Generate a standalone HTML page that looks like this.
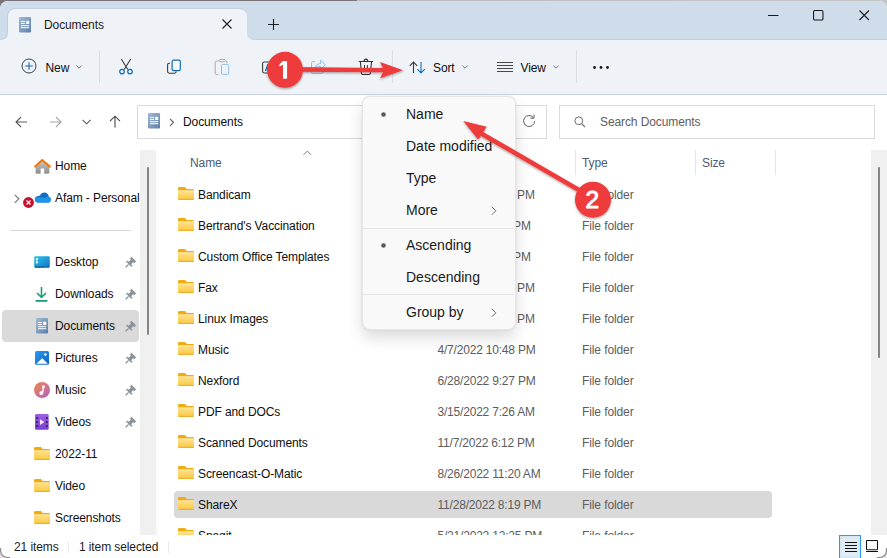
<!DOCTYPE html>
<html><head><meta charset="utf-8">
<style>
*{margin:0;padding:0;box-sizing:border-box}
html,body{width:887px;height:558px;overflow:hidden;background:#e4e4e4}
body{position:relative;font-family:"Liberation Sans",sans-serif;font-size:12px;color:#0e0e0e}
#topline{position:absolute;left:0;top:0;width:887px;height:8px;background:linear-gradient(to right,#7a7478 0,#7a7478 357px,#bcbcbc 357px,#c4c4c4 100%)}
#win{position:absolute;left:0;top:1px;width:887px;height:557px;background:#fff;border-radius:8px;overflow:hidden}
#title{position:absolute;left:0;top:0;width:887px;height:39px;background:#d0ddea}
#tab{position:absolute;left:8px;top:8px;width:239px;height:31px;background:#eff3f8;border-radius:8px 8px 0 0}
#toolbar{position:absolute;left:0;top:39px;width:887px;height:55px;background:#eff3f8;border-bottom:1px solid #cbd5df}
.t{position:absolute;white-space:nowrap;line-height:16px;height:16px;letter-spacing:-0.1px}
svg{position:absolute;overflow:visible}
.sep{position:absolute;width:1px;background:#d9dee4}
.box{position:absolute;border:1px solid #dadada;background:#fff}
.nav{position:absolute;left:55px;color:#1b1b1b}
.row .t{}
.nm{color:#0e0e0e}
.gr{color:#5d5d5d}
.pin{position:absolute;left:125px}
</style></head><body>
<svg width="0" height="0" style="position:absolute"><defs>
<linearGradient id="fg" x1="0" y1="0" x2="0" y2="1"><stop offset="0" stop-color="#fee293"/><stop offset="1" stop-color="#fbc83e"/></linearGradient>
<linearGradient id="docg" x1="0" y1="0" x2="1" y2="1"><stop offset="0" stop-color="#a3bcd7"/><stop offset="1" stop-color="#5b7fa8"/></linearGradient>
<linearGradient id="deskg" x1="0" y1="0" x2="1" y2="1"><stop offset="0" stop-color="#30c4e4"/><stop offset="1" stop-color="#1272cb"/></linearGradient>
<linearGradient id="musg" x1="0" y1="0" x2="1" y2="1"><stop offset="0" stop-color="#f08a4b"/><stop offset="1" stop-color="#b45fc8"/></linearGradient>
<linearGradient id="vidg" x1="0" y1="0" x2="0" y2="1"><stop offset="0" stop-color="#a05ee8"/><stop offset="1" stop-color="#7b3fd6"/></linearGradient>
<linearGradient id="homeg" x1="0" y1="0" x2="0" y2="1"><stop offset="0" stop-color="#c9c9c9"/><stop offset="1" stop-color="#8f8f8f"/></linearGradient>
<linearGradient id="cloudg" x1="0" y1="0" x2="1" y2="1"><stop offset="0" stop-color="#2a8de0"/><stop offset="1" stop-color="#1063c2"/></linearGradient>
</defs></svg>
<div id="topline"></div>
<div id="win">
<div id="toolbar"></div>

<svg width="887" height="42" style="left:0;top:0"><rect x="0" y="0" width="887" height="39" fill="#cfdcea"/><path d="M-1 38.5H0.5Q7.5 38.5 7.5 31.5V16Q7.5 7.5 16 7.5H239Q246.5 7.5 246.5 16V31.5Q246.5 38.5 253.5 38.5H888" fill="none" stroke="#c1cedc" stroke-width="1.2"/><path d="M0 39Q8 39 8 31V16Q8 8 16 8H239Q247 8 247 16V31Q247 39 255 39Z" fill="#eff3f8"/></svg>
<svg width="12" height="16" style="left:19px;top:16px" viewBox="0 0 12 16"><rect x="0" y="0" width="12" height="15.4" rx="1.2" fill="url(#docg)"/><rect x="2" y="4" width="4" height="1" fill="#fff"/><rect x="2" y="6" width="4" height="1" fill="#fff"/><rect x="7.2" y="3.8" width="3" height="3.2" fill="#fff"/><rect x="2" y="8.2" width="8.2" height="1" fill="#fff"/><rect x="2" y="10.2" width="8.2" height="1" fill="#fff"/></svg>
<div class="t" style="left:44px;top:16px;color:#1a1a1a">Documents</div>
<svg width="10" height="10" style="left:222px;top:18px"><path d="M0.5 0.5L9.5 9.5M9.5 0.5L0.5 9.5" stroke="#1f1f1f" stroke-width="1.1"/></svg>
<svg width="11" height="11" style="left:268px;top:18px"><path d="M5.5 0V11M0 5.5H11" stroke="#1f1f1f" stroke-width="1.1"/></svg>
<svg width="11" height="2" style="left:768px;top:14px"><path d="M0 0.5H10.5" stroke="#1a1a1a" stroke-width="1.1"/></svg>
<svg width="11" height="11" style="left:813px;top:9px"><rect x="0.55" y="0.55" width="9.4" height="9.4" rx="1.3" fill="none" stroke="#1a1a1a" stroke-width="1.1"/></svg>
<svg width="11" height="11" style="left:859px;top:9px"><path d="M0.5 0.5L10 10M10 0.5L0.5 10" stroke="#1a1a1a" stroke-width="1.1"/></svg>
<svg width="16" height="16" style="left:20.5px;top:57.4px"><circle cx="8" cy="8" r="7" fill="none" stroke="#404040" stroke-width="1"/><path d="M8 4.2V11.8M4.2 8H11.8" stroke="#0f6cbd" stroke-width="1.1"/></svg>
<div class="t" style="left:45.5px;top:59px">New</div>
<svg width="6" height="4" style="left:76px;top:64px"><path d="M0.3 0.5L3 3.2L5.7 0.5" fill="none" stroke="#707070" stroke-width="0.9"/></svg>
<div class="sep" style="left:99px;top:50px;height:32px"></div>
<svg width="14" height="16" style="left:119px;top:57px"><path d="M2.3 1L8.8 11.5M11.7 1L5.2 11.5" stroke="#3b3b3b" stroke-width="1.1"/><circle cx="3" cy="13.6" r="2.3" fill="#eff3f8" stroke="#0f6cbd" stroke-width="1.2"/><circle cx="11" cy="13.6" r="2.3" fill="#eff3f8" stroke="#0f6cbd" stroke-width="1.2"/></svg>
<svg width="16" height="16" style="left:166px;top:58px"><path d="M4 4.2H3.2C2.2 4.2 1.6 4.8 1.6 5.8V12.6C1.6 13.6 2.2 14.2 3.2 14.2H8.6C9.6 14.2 10.2 13.6 10.2 12.6" fill="none" stroke="#3b3b3b" stroke-width="1.1"/><rect x="6.1" y="1.2" width="8.2" height="10.4" rx="1.6" fill="#f9fafb" stroke="#0f6cbd" stroke-width="1.2"/></svg>
<svg width="16" height="18" style="left:214px;top:57px"><path d="M4.4 16.6H2.6C1.8 16.6 1.2 16 1.2 15.2V4.4C1.2 3.6 1.8 3 2.6 3H4.6M11.6 3H11.6C12.4 3 12.9 3.6 12.9 4.4V5.4" fill="none" stroke="#a9a9a9" stroke-width="1"/><ellipse cx="8.2" cy="2.6" rx="3.3" ry="1.3" fill="none" stroke="#a9a9a9" stroke-width="1"/><rect x="7.5" y="6.4" width="7.2" height="10" rx="1.2" fill="none" stroke="#8ec0ea" stroke-width="1"/></svg>
<svg width="16" height="16" style="left:262px;top:58.5px"><rect x="0.6" y="2" width="14" height="11" rx="1.8" fill="none" stroke="#3b3b3b" stroke-width="1.1"/><path d="M3.5 11L6 4" stroke="#0f6cbd" stroke-width="1.2"/></svg>
<svg width="16" height="16" style="left:311px;top:58px"><path d="M4.2 2.6H2C1 2.6 0.5 3.1 0.5 4.1V12.8C0.5 13.8 1 14.3 2 14.3H10.6C11.6 14.3 12.1 13.8 12.1 12.8V11.6" fill="none" stroke="#b4b4b4" stroke-width="1"/><path d="M3.8 9C4.5 6.4 6.6 4.6 9.6 4.6V1.2L14.4 5.8L9.6 10.2V7.2C7.4 7.2 5.4 7.8 3.8 9Z" fill="none" stroke="#8ec0ea" stroke-width="1" stroke-linejoin="round"/></svg>
<svg width="16" height="18" style="left:358px;top:57px"><path d="M0.8 3.5H15" stroke="#333" stroke-width="1.1"/><path d="M6.1 3.3C6.1 1.9 6.8 1.1 7.95 1.1C9.1 1.1 9.8 1.9 9.8 3.3" fill="none" stroke="#333" stroke-width="1.1"/><path d="M2.4 3.8L3.4 15.2C3.5 16 4 16.5 4.8 16.5H11C11.8 16.5 12.3 16 12.4 15.2L13.5 3.8" fill="none" stroke="#333" stroke-width="1.1"/><path d="M6.5 7V11.5M9.4 7V11.5" stroke="#333" stroke-width="1"/></svg>
<div class="sep" style="left:392px;top:50px;height:32px"></div>
<svg width="17" height="13" style="left:408.5px;top:59.5px"><path d="M4.5 12V1M0.8 4.8L4.5 1L8.2 4.8" fill="none" stroke="#3b3b3b" stroke-width="1.1"/><path d="M12 1V12M8.3 8.2L12 12L15.7 8.2" fill="none" stroke="#0f6cbd" stroke-width="1.1"/></svg>
<div class="t" style="left:433px;top:59px">Sort</div>
<svg width="6" height="4" style="left:462px;top:64px"><path d="M0.3 0.5L3 3.2L5.7 0.5" fill="none" stroke="#707070" stroke-width="0.9"/></svg>
<svg width="16" height="12" style="left:497px;top:60px"><path d="M0 1.5H16M0 4.5H16M0 7.5H16M0 10.5H16" stroke="#484848" stroke-width="1"/></svg>
<div class="t" style="left:520.5px;top:59px">View</div>
<svg width="6" height="4" style="left:553px;top:64px"><path d="M0.3 0.5L3 3.2L5.7 0.5" fill="none" stroke="#707070" stroke-width="0.9"/></svg>
<div class="sep" style="left:576px;top:50px;height:32px"></div>
<svg width="17" height="3" style="left:593px;top:65px"><circle cx="1.5" cy="1.5" r="1.4" fill="#1a1a1a"/><circle cx="8" cy="1.5" r="1.4" fill="#1a1a1a"/><circle cx="14.5" cy="1.5" r="1.4" fill="#1a1a1a"/></svg>
<svg width="13" height="12" style="left:15px;top:115px"><path d="M12 6H1.2M6 1L1 6L6 11" fill="none" stroke="#5a5a5a" stroke-width="1.1"/></svg>
<svg width="13" height="12" style="left:50px;top:115px"><path d="M0 6H10.8M6 1L11 6L6 11" fill="none" stroke="#a6a6a6" stroke-width="1.1"/></svg>
<svg width="10" height="6" style="left:82px;top:118px"><path d="M0.5 0.8L4.6 4.8L8.7 0.8" fill="none" stroke="#5a5a5a" stroke-width="1.1"/></svg>
<svg width="13" height="13" style="left:109.3px;top:113.8px"><path d="M6 12.5V1.2M1 6.2L6 1.2L11 6.2" fill="none" stroke="#444" stroke-width="1.1"/></svg>
<div class="box" style="left:137px;top:104px;width:410px;height:34px"></div>
<svg width="12" height="16" style="left:148px;top:112px" viewBox="0 0 12 16"><rect x="0" y="0" width="12" height="15.4" rx="1.2" fill="url(#docg)"/><rect x="2" y="4" width="4" height="1" fill="#fff"/><rect x="2" y="6" width="4" height="1" fill="#fff"/><rect x="7.2" y="3.8" width="3" height="3.2" fill="#fff"/><rect x="2" y="8.2" width="8.2" height="1" fill="#fff"/><rect x="2" y="10.2" width="8.2" height="1" fill="#fff"/></svg>
<svg width="6" height="9" style="left:168.5px;top:116.5px"><path d="M1 0.8L4.5 4.3L1 7.8" fill="none" stroke="#5a5a5a" stroke-width="1.1"/></svg>
<div class="t" style="left:183px;top:112.5px">Documents</div>
<svg width="14" height="14" style="left:522px;top:112px"><path d="M11.4 4.6A5.5 5.5 0 1 0 12.6 8.2" fill="none" stroke="#606060" stroke-width="1"/><path d="M12 1.6V5.2H8.4" fill="none" stroke="#606060" stroke-width="1"/></svg>
<div class="box" style="left:559px;top:104px;width:316px;height:34px"></div>
<svg width="12" height="12" style="left:574px;top:114.5px"><circle cx="4.8" cy="4.8" r="3.9" fill="none" stroke="#707070" stroke-width="1"/><path d="M7.6 7.6L11 11" stroke="#707070" stroke-width="1.1"/></svg>
<div class="t" style="left:600px;top:112.5px;color:#5d5d5d">Search Documents</div>
<svg width="17" height="16" style="left:33.5px;top:157px" viewBox="0 0 17 16"><path d="M1.6 8L8.2 2.2L15.4 8V14.6C15.4 15.2 15 15.7 14.3 15.7H10.2V10.4H6.6V15.7H2.7C2 15.7 1.6 15.2 1.6 14.6Z" fill="url(#homeg)"/><path d="M1.2 8.6L8.2 2L15.8 8.6" fill="none" stroke="#ea7a12" stroke-width="2.1" stroke-linejoin="round" stroke-linecap="round"/></svg>
<div class="t" style="left:55px;top:156.5px;">Home</div>
<svg width="6" height="10" style="left:13.8px;top:192.6px"><path d="M0.8 0.8L4.8 4.8L0.8 8.8" fill="none" stroke="#777" stroke-width="1.2"/></svg>
<svg width="17" height="11" style="left:33.5px;top:191px" viewBox="0 0 17 11"><path d="M6 3.6C6.8 1.8 8.4 0.6 10.4 0.6C12.8 0.6 14.6 2.4 14.8 4.8C16 5 16.8 6 16.8 7.4C16.8 9.2 15.6 10.6 13.8 10.6H3.8C2 10.6 0.8 9.2 0.8 7.6C0.8 5.6 2.4 4 4.4 4C5 4 5.5 3.8 6 3.6Z" fill="#0f6cc9"/><path d="M0.8 7.6C0.8 9.2 2 10.6 3.8 10.6H13.8C15.6 10.6 16.8 9.2 16.8 7.4C16.8 6.2 16 5.2 14.9 4.9C13.4 4.6 12 5 10.8 5.8L6.4 5.2C4 4.8 0.8 5.2 0.8 7.6Z" fill="#1e94e6"/></svg>
<svg width="12" height="12" style="left:23.2px;top:195.5px"><circle cx="5.5" cy="5.5" r="5.4" fill="#c8102e"/><path d="M3.5 3.5L7.5 7.5M7.5 3.5L3.5 7.5" stroke="#fff" stroke-width="1.2"/></svg>
<div class="t" style="left:55px;top:188.5px;width:85px;overflow:hidden">Afam - Personal</div>
<div class="a" style="position:absolute;left:10px;top:229px;width:121px;height:1px;background:#d9d9d9"></div>
<svg width="16" height="12" style="left:34px;top:255px"><rect x="0.2" y="0.3" width="15.6" height="11.4" rx="1.2" fill="url(#deskg)"/><rect x="1.9" y="2.3" width="2" height="2" fill="#fff"/><rect x="1.9" y="5.3" width="2" height="2" fill="#fff"/><path d="M0.8 11H10.8M11.8 11H12.6M13.6 11H14.6" stroke="#0b4680" stroke-width="1.2"/></svg>
<div class="t" style="left:55px;top:252.5px;">Desktop</div>
<svg width="14" height="14" style="left:124px;top:254px"><path d="M7.6 2.1L11.9 6.4L10.35 7.95L9.33 6.93L6.92 9.34L8.26 10.68L7.34 11.6L2.4 6.66L3.32 5.74L4.66 7.08L7.07 4.67L6.05 3.65Z" fill="#87939d" stroke="#87939d" stroke-width="0.5" stroke-linejoin="round"/><path d="M4.6 9.4L1.7 12.3" stroke="#87939d" stroke-width="1.3"/></svg>
<svg width="14" height="16" style="left:35px;top:284.5px"><path d="M6.5 1V11.2M2 7L6.5 11.4L11 7" fill="none" stroke="#1a9c7d" stroke-width="1.6"/><path d="M0.6 14.9H12.4" stroke="#1a9c7d" stroke-width="1.8"/></svg>
<div class="t" style="left:55px;top:284.5px;">Downloads</div>
<svg width="14" height="14" style="left:124px;top:286px"><path d="M7.6 2.1L11.9 6.4L10.35 7.95L9.33 6.93L6.92 9.34L8.26 10.68L7.34 11.6L2.4 6.66L3.32 5.74L4.66 7.08L7.07 4.67L6.05 3.65Z" fill="#87939d" stroke="#87939d" stroke-width="0.5" stroke-linejoin="round"/><path d="M4.6 9.4L1.7 12.3" stroke="#87939d" stroke-width="1.3"/></svg>
<div class="a" style="position:absolute;left:2px;top:309px;width:137px;height:32px;background:#dadada;border-radius:4px"></div>
<svg width="12" height="16" style="left:36px;top:317px" viewBox="0 0 12 16"><rect x="0" y="0" width="12" height="15.4" rx="1.2" fill="url(#docg)"/><rect x="2" y="4" width="4" height="1" fill="#fff"/><rect x="2" y="6" width="4" height="1" fill="#fff"/><rect x="7.2" y="3.8" width="3" height="3.2" fill="#fff"/><rect x="2" y="8.2" width="8.2" height="1" fill="#fff"/><rect x="2" y="10.2" width="8.2" height="1" fill="#fff"/></svg>
<div class="t" style="left:55px;top:316.5px;">Documents</div>
<svg width="14" height="14" style="left:124px;top:318px"><path d="M7.6 2.1L11.9 6.4L10.35 7.95L9.33 6.93L6.92 9.34L8.26 10.68L7.34 11.6L2.4 6.66L3.32 5.74L4.66 7.08L7.07 4.67L6.05 3.65Z" fill="#87939d" stroke="#87939d" stroke-width="0.5" stroke-linejoin="round"/><path d="M4.6 9.4L1.7 12.3" stroke="#87939d" stroke-width="1.3"/></svg>
<svg width="14" height="14" style="left:35px;top:350px"><defs><linearGradient id="picg" x1="0" y1="0" x2="1" y2="1"><stop offset="0" stop-color="#2b9af0"/><stop offset="1" stop-color="#0a64c2"/></linearGradient></defs><rect x="0" y="0" width="14" height="13.8" rx="1.6" fill="url(#picg)"/><path d="M1.3 12.8L7.2 7.2L12.9 12.8Z" fill="#fff"/><circle cx="10.4" cy="3.5" r="1.2" fill="#fff"/></svg>
<div class="t" style="left:55px;top:348.5px;">Pictures</div>
<svg width="14" height="14" style="left:124px;top:350px"><path d="M7.6 2.1L11.9 6.4L10.35 7.95L9.33 6.93L6.92 9.34L8.26 10.68L7.34 11.6L2.4 6.66L3.32 5.74L4.66 7.08L7.07 4.67L6.05 3.65Z" fill="#87939d" stroke="#87939d" stroke-width="0.5" stroke-linejoin="round"/><path d="M4.6 9.4L1.7 12.3" stroke="#87939d" stroke-width="1.3"/></svg>
<svg width="16" height="16" style="left:34px;top:381px"><circle cx="8" cy="8" r="8" fill="url(#musg)"/><path d="M9 3.2V10.6" stroke="#fff" stroke-width="1.4"/><circle cx="7.3" cy="11" r="1.9" fill="#fff"/><path d="M9 3C10 3.4 11 4 11 5.6V6.6C10.6 5.6 9.8 5.2 9 5.2Z" fill="#fff"/></svg>
<div class="t" style="left:55px;top:380.5px;">Music</div>
<svg width="14" height="14" style="left:124px;top:382px"><path d="M7.6 2.1L11.9 6.4L10.35 7.95L9.33 6.93L6.92 9.34L8.26 10.68L7.34 11.6L2.4 6.66L3.32 5.74L4.66 7.08L7.07 4.67L6.05 3.65Z" fill="#87939d" stroke="#87939d" stroke-width="0.5" stroke-linejoin="round"/><path d="M4.6 9.4L1.7 12.3" stroke="#87939d" stroke-width="1.3"/></svg>
<svg width="14" height="16" style="left:35px;top:413px"><rect x="0" y="0" width="13.7" height="15.8" rx="1.4" fill="url(#vidg)"/><rect x="1.2" y="3.1" width="1.9" height="1.9" rx="0.3" fill="#3b2160"/><rect x="1.2" y="7.1" width="1.9" height="1.9" rx="0.3" fill="#3b2160"/><rect x="1.2" y="11.1" width="1.9" height="1.9" rx="0.3" fill="#3b2160"/><rect x="10.9" y="3.1" width="1.9" height="1.9" rx="0.3" fill="#3b2160"/><rect x="10.9" y="7.1" width="1.9" height="1.9" rx="0.3" fill="#3b2160"/><rect x="10.9" y="11.1" width="1.9" height="1.9" rx="0.3" fill="#3b2160"/><path d="M5 5.2L9.4 8L5 11Z" fill="#f1ecf6"/></svg>
<div class="t" style="left:55px;top:412.5px;">Videos</div>
<svg width="14" height="14" style="left:124px;top:414px"><path d="M7.6 2.1L11.9 6.4L10.35 7.95L9.33 6.93L6.92 9.34L8.26 10.68L7.34 11.6L2.4 6.66L3.32 5.74L4.66 7.08L7.07 4.67L6.05 3.65Z" fill="#87939d" stroke="#87939d" stroke-width="0.5" stroke-linejoin="round"/><path d="M4.6 9.4L1.7 12.3" stroke="#87939d" stroke-width="1.3"/></svg>
<svg width="16" height="13" viewBox="0 0 16 13" style="left:34px;top:445.7px"><path d="M0 1.3Q0 0.1 1.2 0.1H6.6Q7.2 0.1 7.6 0.6L8.8 2H14.8Q16 2 16 3.2V5H0Z" fill="#efad12"/><path d="M0 3.5H16V11.7Q16 12.9 14.8 12.9H1.2Q0 12.9 0 11.7Z" fill="url(#fg)"/><path d="M0.2 3.8H15.8" fill="none" stroke="#fff0bd" stroke-width="0.6"/><path d="M0.4 12.4H15.6" stroke="#eaa928" stroke-width="0.9"/></svg>
<div class="t" style="left:55px;top:444.5px;">2022-11</div>
<svg width="16" height="13" viewBox="0 0 16 13" style="left:34px;top:477.7px"><path d="M0 1.3Q0 0.1 1.2 0.1H6.6Q7.2 0.1 7.6 0.6L8.8 2H14.8Q16 2 16 3.2V5H0Z" fill="#efad12"/><path d="M0 3.5H16V11.7Q16 12.9 14.8 12.9H1.2Q0 12.9 0 11.7Z" fill="url(#fg)"/><path d="M0.2 3.8H15.8" fill="none" stroke="#fff0bd" stroke-width="0.6"/><path d="M0.4 12.4H15.6" stroke="#eaa928" stroke-width="0.9"/></svg>
<div class="t" style="left:55px;top:476.5px;">Video</div>
<svg width="16" height="13" viewBox="0 0 16 13" style="left:34px;top:509.7px"><path d="M0 1.3Q0 0.1 1.2 0.1H6.6Q7.2 0.1 7.6 0.6L8.8 2H14.8Q16 2 16 3.2V5H0Z" fill="#efad12"/><path d="M0 3.5H16V11.7Q16 12.9 14.8 12.9H1.2Q0 12.9 0 11.7Z" fill="url(#fg)"/><path d="M0.2 3.8H15.8" fill="none" stroke="#fff0bd" stroke-width="0.6"/><path d="M0.4 12.4H15.6" stroke="#eaa928" stroke-width="0.9"/></svg>
<div class="t" style="left:55px;top:508.5px;">Screenshots</div>
<div class="a" style="position:absolute;left:140px;top:149px;width:16px;height:385px;background:#f0f0f0"></div>
<div class="a" style="position:absolute;left:147px;top:166px;width:2px;height:168px;background:#858585;border-radius:1px"></div>
<div class="a" style="position:absolute;left:157px;top:149px;width:1px;height:385px;background:#f7f7f7"></div>
<div class="t" style="left:190px;top:153.5px;color:#4c5b76">Name</div>
<svg width="9" height="6" style="left:303px;top:148.5px"><path d="M0.6 4.8L4.3 1.1L8 4.8" fill="none" stroke="#6a6a6a" stroke-width="0.9"/></svg>
<div class="a" style="position:absolute;left:575px;top:149px;width:1px;height:25px;background:#e5e5e5"></div>
<div class="a" style="position:absolute;left:695px;top:149px;width:1px;height:25px;background:#e5e5e5"></div>
<div class="a" style="position:absolute;left:775px;top:149px;width:1px;height:25px;background:#e5e5e5"></div>
<div class="t" style="left:582px;top:153.5px;color:#4c5b76">Type</div>
<div class="t" style="left:702px;top:153.5px;color:#4c5b76">Size</div>
<div style="position:absolute;left:160px;top:176px;width:711px;height:358px;overflow:hidden">
<div class="a" style="position:absolute;left:14px;top:314px;width:598px;height:27px;background:#d9d9d9;border-radius:4px"></div>
<svg width="16" height="13" viewBox="0 0 16 13" style="left:18px;top:10px"><path d="M0 1.3Q0 0.1 1.2 0.1H6.6Q7.2 0.1 7.6 0.6L8.8 2H14.8Q16 2 16 3.2V5H0Z" fill="#efad12"/><path d="M0 3.5H16V11.7Q16 12.9 14.8 12.9H1.2Q0 12.9 0 11.7Z" fill="url(#fg)"/><path d="M0.2 3.8H15.8" fill="none" stroke="#fff0bd" stroke-width="0.6"/><path d="M0.4 12.4H15.6" stroke="#eaa928" stroke-width="0.9"/></svg>
<div class="t" style="left:38px;top:10px">Bandicam</div>
<div class="t gr" style="left:357px;top:10px">PM</div>
<div class="t gr" style="left:422px;top:10px">File folder</div>
<svg width="16" height="13" viewBox="0 0 16 13" style="left:18px;top:41px"><path d="M0 1.3Q0 0.1 1.2 0.1H6.6Q7.2 0.1 7.6 0.6L8.8 2H14.8Q16 2 16 3.2V5H0Z" fill="#efad12"/><path d="M0 3.5H16V11.7Q16 12.9 14.8 12.9H1.2Q0 12.9 0 11.7Z" fill="url(#fg)"/><path d="M0.2 3.8H15.8" fill="none" stroke="#fff0bd" stroke-width="0.6"/><path d="M0.4 12.4H15.6" stroke="#eaa928" stroke-width="0.9"/></svg>
<div class="t" style="left:38px;top:41px">Bertrand's Vaccination</div>
<div class="t gr" style="left:353px;top:41px">PM</div>
<div class="t gr" style="left:422px;top:41px">File folder</div>
<svg width="16" height="13" viewBox="0 0 16 13" style="left:18px;top:72px"><path d="M0 1.3Q0 0.1 1.2 0.1H6.6Q7.2 0.1 7.6 0.6L8.8 2H14.8Q16 2 16 3.2V5H0Z" fill="#efad12"/><path d="M0 3.5H16V11.7Q16 12.9 14.8 12.9H1.2Q0 12.9 0 11.7Z" fill="url(#fg)"/><path d="M0.2 3.8H15.8" fill="none" stroke="#fff0bd" stroke-width="0.6"/><path d="M0.4 12.4H15.6" stroke="#eaa928" stroke-width="0.9"/></svg>
<div class="t" style="left:38px;top:72px">Custom Office Templates</div>
<div class="t gr" style="left:353px;top:72px">PM</div>
<div class="t gr" style="left:422px;top:72px">File folder</div>
<svg width="16" height="13" viewBox="0 0 16 13" style="left:18px;top:103px"><path d="M0 1.3Q0 0.1 1.2 0.1H6.6Q7.2 0.1 7.6 0.6L8.8 2H14.8Q16 2 16 3.2V5H0Z" fill="#efad12"/><path d="M0 3.5H16V11.7Q16 12.9 14.8 12.9H1.2Q0 12.9 0 11.7Z" fill="url(#fg)"/><path d="M0.2 3.8H15.8" fill="none" stroke="#fff0bd" stroke-width="0.6"/><path d="M0.4 12.4H15.6" stroke="#eaa928" stroke-width="0.9"/></svg>
<div class="t" style="left:38px;top:103px">Fax</div>
<div class="t gr" style="left:357px;top:103px">PM</div>
<div class="t gr" style="left:422px;top:103px">File folder</div>
<svg width="16" height="13" viewBox="0 0 16 13" style="left:18px;top:134px"><path d="M0 1.3Q0 0.1 1.2 0.1H6.6Q7.2 0.1 7.6 0.6L8.8 2H14.8Q16 2 16 3.2V5H0Z" fill="#efad12"/><path d="M0 3.5H16V11.7Q16 12.9 14.8 12.9H1.2Q0 12.9 0 11.7Z" fill="url(#fg)"/><path d="M0.2 3.8H15.8" fill="none" stroke="#fff0bd" stroke-width="0.6"/><path d="M0.4 12.4H15.6" stroke="#eaa928" stroke-width="0.9"/></svg>
<div class="t" style="left:38px;top:134px">Linux Images</div>
<div class="t gr" style="left:357px;top:134px">PM</div>
<div class="t gr" style="left:422px;top:134px">File folder</div>
<svg width="16" height="13" viewBox="0 0 16 13" style="left:18px;top:165px"><path d="M0 1.3Q0 0.1 1.2 0.1H6.6Q7.2 0.1 7.6 0.6L8.8 2H14.8Q16 2 16 3.2V5H0Z" fill="#efad12"/><path d="M0 3.5H16V11.7Q16 12.9 14.8 12.9H1.2Q0 12.9 0 11.7Z" fill="url(#fg)"/><path d="M0.2 3.8H15.8" fill="none" stroke="#fff0bd" stroke-width="0.6"/><path d="M0.4 12.4H15.6" stroke="#eaa928" stroke-width="0.9"/></svg>
<div class="t" style="left:38px;top:165px">Music</div>
<div class="t gr" style="left:277.5px;top:165px;letter-spacing:-0.2px">4/7/2022 10:48 PM</div>
<div class="t gr" style="left:422px;top:165px">File folder</div>
<svg width="16" height="13" viewBox="0 0 16 13" style="left:18px;top:196px"><path d="M0 1.3Q0 0.1 1.2 0.1H6.6Q7.2 0.1 7.6 0.6L8.8 2H14.8Q16 2 16 3.2V5H0Z" fill="#efad12"/><path d="M0 3.5H16V11.7Q16 12.9 14.8 12.9H1.2Q0 12.9 0 11.7Z" fill="url(#fg)"/><path d="M0.2 3.8H15.8" fill="none" stroke="#fff0bd" stroke-width="0.6"/><path d="M0.4 12.4H15.6" stroke="#eaa928" stroke-width="0.9"/></svg>
<div class="t" style="left:38px;top:196px">Nexford</div>
<div class="t gr" style="left:277.5px;top:196px;letter-spacing:-0.2px">6/28/2022 9:27 PM</div>
<div class="t gr" style="left:422px;top:196px">File folder</div>
<svg width="16" height="13" viewBox="0 0 16 13" style="left:18px;top:227px"><path d="M0 1.3Q0 0.1 1.2 0.1H6.6Q7.2 0.1 7.6 0.6L8.8 2H14.8Q16 2 16 3.2V5H0Z" fill="#efad12"/><path d="M0 3.5H16V11.7Q16 12.9 14.8 12.9H1.2Q0 12.9 0 11.7Z" fill="url(#fg)"/><path d="M0.2 3.8H15.8" fill="none" stroke="#fff0bd" stroke-width="0.6"/><path d="M0.4 12.4H15.6" stroke="#eaa928" stroke-width="0.9"/></svg>
<div class="t" style="left:38px;top:227px">PDF and DOCs</div>
<div class="t gr" style="left:277.5px;top:227px;letter-spacing:-0.2px">3/15/2022 7:26 AM</div>
<div class="t gr" style="left:422px;top:227px">File folder</div>
<svg width="16" height="13" viewBox="0 0 16 13" style="left:18px;top:258px"><path d="M0 1.3Q0 0.1 1.2 0.1H6.6Q7.2 0.1 7.6 0.6L8.8 2H14.8Q16 2 16 3.2V5H0Z" fill="#efad12"/><path d="M0 3.5H16V11.7Q16 12.9 14.8 12.9H1.2Q0 12.9 0 11.7Z" fill="url(#fg)"/><path d="M0.2 3.8H15.8" fill="none" stroke="#fff0bd" stroke-width="0.6"/><path d="M0.4 12.4H15.6" stroke="#eaa928" stroke-width="0.9"/></svg>
<div class="t" style="left:38px;top:258px">Scanned Documents</div>
<div class="t gr" style="left:277.5px;top:258px;letter-spacing:-0.2px">11/7/2022 6:12 PM</div>
<div class="t gr" style="left:422px;top:258px">File folder</div>
<svg width="16" height="13" viewBox="0 0 16 13" style="left:18px;top:289px"><path d="M0 1.3Q0 0.1 1.2 0.1H6.6Q7.2 0.1 7.6 0.6L8.8 2H14.8Q16 2 16 3.2V5H0Z" fill="#efad12"/><path d="M0 3.5H16V11.7Q16 12.9 14.8 12.9H1.2Q0 12.9 0 11.7Z" fill="url(#fg)"/><path d="M0.2 3.8H15.8" fill="none" stroke="#fff0bd" stroke-width="0.6"/><path d="M0.4 12.4H15.6" stroke="#eaa928" stroke-width="0.9"/></svg>
<div class="t" style="left:38px;top:289px">Screencast-O-Matic</div>
<div class="t gr" style="left:277.5px;top:289px;letter-spacing:-0.2px">8/26/2022 11:20 AM</div>
<div class="t gr" style="left:422px;top:289px">File folder</div>
<svg width="16" height="13" viewBox="0 0 16 13" style="left:18px;top:320px"><path d="M0 1.3Q0 0.1 1.2 0.1H6.6Q7.2 0.1 7.6 0.6L8.8 2H14.8Q16 2 16 3.2V5H0Z" fill="#efad12"/><path d="M0 3.5H16V11.7Q16 12.9 14.8 12.9H1.2Q0 12.9 0 11.7Z" fill="url(#fg)"/><path d="M0.2 3.8H15.8" fill="none" stroke="#fff0bd" stroke-width="0.6"/><path d="M0.4 12.4H15.6" stroke="#eaa928" stroke-width="0.9"/></svg>
<div class="t" style="left:38px;top:320px">ShareX</div>
<div class="t gr" style="left:277.5px;top:320px;letter-spacing:-0.2px">11/28/2022 8:19 PM</div>
<div class="t gr" style="left:422px;top:320px">File folder</div>
<svg width="16" height="13" viewBox="0 0 16 13" style="left:18px;top:351px"><path d="M0 1.3Q0 0.1 1.2 0.1H6.6Q7.2 0.1 7.6 0.6L8.8 2H14.8Q16 2 16 3.2V5H0Z" fill="#efad12"/><path d="M0 3.5H16V11.7Q16 12.9 14.8 12.9H1.2Q0 12.9 0 11.7Z" fill="url(#fg)"/><path d="M0.2 3.8H15.8" fill="none" stroke="#fff0bd" stroke-width="0.6"/><path d="M0.4 12.4H15.6" stroke="#eaa928" stroke-width="0.9"/></svg>
<div class="t" style="left:38px;top:351px">Snagit</div>
<div class="t gr" style="left:277.5px;top:351px;letter-spacing:-0.2px">5/21/2022 12:25 PM</div>
<div class="t gr" style="left:422px;top:351px">File folder</div>
</div>
<div class="a" style="position:absolute;left:871px;top:149px;width:16px;height:385px;background:#f0f0f0"></div>
<div class="a" style="position:absolute;left:878px;top:166px;width:2px;height:191px;background:#858585;border-radius:1px"></div>
<div class="t" style="left:14px;top:537.5px;color:#1b1b1b">21 items</div>
<div class="a" style="position:absolute;left:68px;top:540px;width:1px;height:12px;background:#ebebeb"></div>
<div class="t" style="left:79px;top:537.5px;color:#1b1b1b">1 item selected</div>
<div class="a" style="position:absolute;left:168px;top:540px;width:1px;height:12px;background:#ebebeb"></div>
<div class="a" style="position:absolute;left:839px;top:534px;width:22px;height:24px;background:#e1ecf5;border:1px solid #2b9de0;box-shadow:inset 0 0 0 2px #d3e8f6"></div>
<svg width="14" height="12" style="left:845px;top:540px"><path d="M0 1.5H12M0 4.5H12M0 7.5H12M0 10.5H12" stroke="#111" stroke-width="1"/></svg>
<svg width="14" height="14" style="left:865px;top:538px"><rect x="1.5" y="1.5" width="11" height="9.2" rx="0.6" fill="none" stroke="#111" stroke-width="1.1"/><path d="M1 12.5H13" stroke="#111" stroke-width="1.1"/></svg>
<div class="a" style="position:absolute;left:362px;top:94.5px;width:153.5px;height:234.5px;background:#f9f9f9;border:1px solid #e6e6e6;border-radius:8px;box-shadow:0 8px 16px rgba(0,0,0,0.14),0 0 2px rgba(0,0,0,0.1)"></div>
<div class="t" style="left:406px;top:105px;font-size:14px;color:#1a1a1a;letter-spacing:0">Name</div>
<svg width="6" height="6" style="left:381.2px;top:110.5px"><circle cx="2.5" cy="2.5" r="2.3" fill="#5a5a5a"/></svg>
<div class="t" style="left:406px;top:137px;font-size:14px;color:#1a1a1a;letter-spacing:0">Date modified</div>
<div class="t" style="left:406px;top:169px;font-size:14px;color:#1a1a1a;letter-spacing:0">Type</div>
<div class="t" style="left:406px;top:201px;font-size:14px;color:#1a1a1a;letter-spacing:0">More</div>
<svg width="6" height="10" style="left:491px;top:204.5px"><path d="M0.8 0.8L4.8 4.8L0.8 8.8" fill="none" stroke="#6a6a6a" stroke-width="1"/></svg>
<div class="t" style="left:406px;top:236px;font-size:14px;color:#1a1a1a;letter-spacing:0">Ascending</div>
<svg width="6" height="6" style="left:381.2px;top:241.5px"><circle cx="2.5" cy="2.5" r="2.3" fill="#5a5a5a"/></svg>
<div class="t" style="left:406px;top:268px;font-size:14px;color:#1a1a1a;letter-spacing:0">Descending</div>
<div class="t" style="left:406px;top:303px;font-size:14px;color:#1a1a1a;letter-spacing:0">Group by</div>
<svg width="6" height="10" style="left:491px;top:306.5px"><path d="M0.8 0.8L4.8 4.8L0.8 8.8" fill="none" stroke="#6a6a6a" stroke-width="1"/></svg>
<div class="a" style="position:absolute;left:363px;top:227px;width:151px;height:1px;background:#e8e8e8"></div>
<div class="a" style="position:absolute;left:363px;top:293px;width:151px;height:1px;background:#e8e8e8"></div>
<svg width="887" height="558" style="left:0;top:-1px">
<defs><filter id="sh" x="-30%" y="-30%" width="160%" height="160%"><feDropShadow dx="0" dy="1.2" stdDeviation="1" flood-color="#000" flood-opacity="0.35"/></filter></defs>
<g filter="url(#sh)">
<path d="M290 67L383 68.1L380 62L403 70.2L380 78.2L383 72.2L290 71.8Z" fill="#ee3b3b"/>
<circle cx="285" cy="69.8" r="18" fill="#ee3b3b"/>
<path d="M589.2 193.2L483.2 131.9L486.7 126.7L463.3 121.1L478 139.6L480.9 135.9L586.9 197.2Z" fill="#ee3b3b"/>
<circle cx="593" cy="199.7" r="18" fill="#ee3b3b"/>
</g>
<path d="M282.9 61H287.1V78.7H283V64.7L279.4 66.5V64.2Z" fill="#fff"/>
<text x="592.2" y="208.3" text-anchor="middle" font-family="Liberation Sans" font-size="24.5" fill="#fff" stroke="#fff" stroke-width="1">2</text>
</svg>
</div>
<svg width="10" height="10" style="left:0;top:548px"><path d="M0.5 0V1.5Q0.5 9.5 8.5 9.5H10" fill="none" stroke="#8c8c8c" stroke-width="1.2"/></svg>
<svg width="10" height="10" style="left:877px;top:548px"><path d="M9.5 0V1.5Q9.5 9.5 1.5 9.5H0" fill="none" stroke="#8c8c8c" stroke-width="1.2"/></svg>
</body></html>
